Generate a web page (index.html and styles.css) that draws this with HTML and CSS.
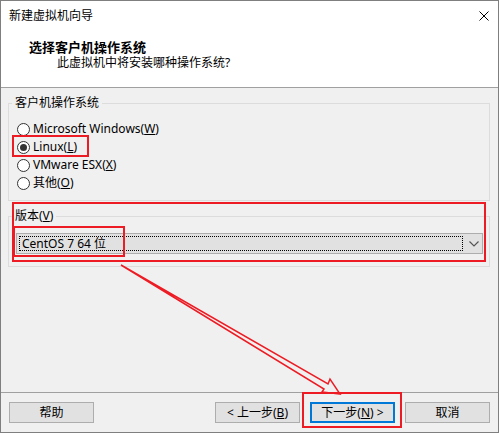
FILE: index.html
```html
<!DOCTYPE html>
<html lang="zh-CN">
<head>
    <meta charset="UTF-8">
    <title>新建虚拟机向导</title>
    <link rel="stylesheet" href="styles.css">
</head>
<body>
    <div class="window">
        <div class="titlebar">
            <span class="title">新建虚拟机向导</span>
            <svg class="close" width="10" height="10" viewBox="0 0 10 10">
                <path d="M0.5 0.5 L9.5 9.5 M9.5 0.5 L0.5 9.5" stroke="#000" stroke-width="1" fill="none"/>
            </svg>
        </div>
        <div class="header">
            <div class="heading">选择客户机操作系统</div>
            <div class="subheading">此虚拟机中将安装哪种操作系统?</div>
        </div>
        <div class="content">
            <fieldset class="group group-os">
                <legend>客户机操作系统</legend>
                <div class="radio-list">
                    <div class="radio"><span class="radio-box"></span>Microsoft Windows(<u>W</u>)</div>
                    <div class="radio checked"><span class="radio-box"></span>Linux(<u>L</u>)</div>
                    <div class="radio"><span class="radio-box"></span>VMware ESX(<u>X</u>)</div>
                    <div class="radio"><span class="radio-box"></span>其他(<u>O</u>)</div>
                </div>
            </fieldset>
            <fieldset class="group group-version">
                <legend>版本(<u>V</u>)</legend>
                <div class="combo">
                    <div class="combo-value">CentOS 7 64 位</div>
                    <div class="combo-arrow">
                        <svg width="10" height="6" viewBox="0 0 10 6">
                            <path d="M0.5 0.5 L5 5 L9.5 0.5" stroke="#555" stroke-width="1.2" fill="none"/>
                        </svg>
                    </div>
                </div>
            </fieldset>
        </div>
        <div class="footer">
            <button class="btn">帮助</button>
            <div class="spacer"></div>
            <button class="btn">&lt; 上一步(<u>B</u>)</button>
            <button class="btn btn-default">下一步(<u>N</u>) &gt;</button>
            <button class="btn">取消</button>
        </div>

        <!-- annotations drawn over the dialog -->
        <div class="mark mark-linux"></div>
        <div class="mark mark-version"></div>
        <div class="mark mark-combo"></div>
        <div class="mark mark-next"></div>
        <svg class="arrow" width="499" height="433" viewBox="0 0 499 433">
            <polygon points="121,265 328,384 330,379 340,394 322,392 324,389" fill="none" stroke="#ed1c24" stroke-width="1.5" stroke-linejoin="miter"/>
        </svg>
    </div>
</body>
</html>
```

FILE: styles.css
```css
html, body {
    margin: 0;
    padding: 0;
}
body {
    font-family: "Noto Sans", "Noto Sans CJK SC", sans-serif;
    font-size: 12px;
    color: #000;
    background-color: #fff;
}
.window {
    position: relative;
    width: 499px;
    height: 433px;
    box-sizing: border-box;
    border: 1px solid #7f7f7f;
    display: flex;
    flex-direction: column;
    background-color: #f0f0f0;
}
.titlebar {
    height: 29px;
    flex: none;
    display: flex;
    align-items: center;
    padding: 0 9px 0 8px;
    background-color: #fff;
}
.title {
    flex: 1;
    line-height: 16px;
}
.close {
    display: block;
}
.header {
    height: 57px;
    flex: none;
    box-sizing: border-box;
    padding: 9px 0 0 28px;
    background-color: #fff;
    border-bottom: 1px solid #a0a0a0;
    height: 58px;
}
.heading {
    font-size: 13px;
    font-weight: bold;
    line-height: 16px;
}
.subheading {
    padding-left: 28px;
    line-height: 16px;
}
.content {
    flex: 1;
    padding: 0 8px 0 7px;
}
.group {
    margin: 7px 0 0 0;
    border: 1px solid #dcdcdc;
    min-width: 0;
}
.group legend {
    padding: 0 3px;
    line-height: 16px;
}
.group-os {
    padding: 9px 0 8px 3px;
}
.radio-list {
    padding-left: 5px;
}
.radio {
    height: 18px;
    display: flex;
    align-items: center;
    line-height: 16px;
}
.radio-box {
    width: 13px;
    height: 13px;
    box-sizing: border-box;
    border: 1px solid #333;
    border-radius: 50%;
    background-color: #fff;
    margin-right: 3px;
    display: flex;
    align-items: center;
    justify-content: center;
}
.radio.checked .radio-box::after {
    content: "";
    width: 7px;
    height: 7px;
    border-radius: 50%;
    background-color: #333;
}
.group-version {
    padding: 9px 6px 12px 3px;
}
.combo {
    margin-left: 4px;
    height: 21px;
    box-sizing: border-box;
    border: 1px solid #adadad;
    background-color: #e1e1e1;
    display: flex;
}
.combo-value {
    flex: 1;
    margin: 2px;
    border: 1px dotted #000;
    padding-left: 2px;
    line-height: 13px;
    display: flex;
    align-items: center;
}
.combo-arrow {
    width: 17px;
    display: flex;
    align-items: center;
    justify-content: center;
}
.combo-arrow svg {
    display: block;
}
.footer {
    height: 40px;
    flex: none;
    box-sizing: border-box;
    border-top: 1px solid #a0a0a0;
    padding: 9px 8px 0 8px;
    display: flex;
    align-items: flex-start;
    gap: 10px;
}
.spacer {
    flex: 1;
}
.btn {
    width: 85px;
    height: 21px;
    box-sizing: border-box;
    border: 1px solid #adadad;
    background-color: #e1e1e1;
    font-family: inherit;
    font-size: 12px;
    line-height: 17px;
    color: #000;
    padding: 0;
}
.btn-default {
    border: 2px solid #0078d7;
}
.mark {
    position: absolute;
    box-sizing: border-box;
    border: 2px solid #ed1c24;
}
.mark-linux {
    left: 11px;
    top: 134px;
    width: 77px;
    height: 22px;
}
.mark-version {
    left: 11px;
    top: 201px;
    width: 474px;
    height: 60px;
}
.mark-combo {
    left: 12px;
    top: 225px;
    width: 112px;
    height: 31px;
}
.mark-next {
    left: 301px;
    top: 391px;
    width: 100px;
    height: 36px;
}
.arrow {
    position: absolute;
    left: -1px;
    top: -1px;
    pointer-events: none;
}
```
